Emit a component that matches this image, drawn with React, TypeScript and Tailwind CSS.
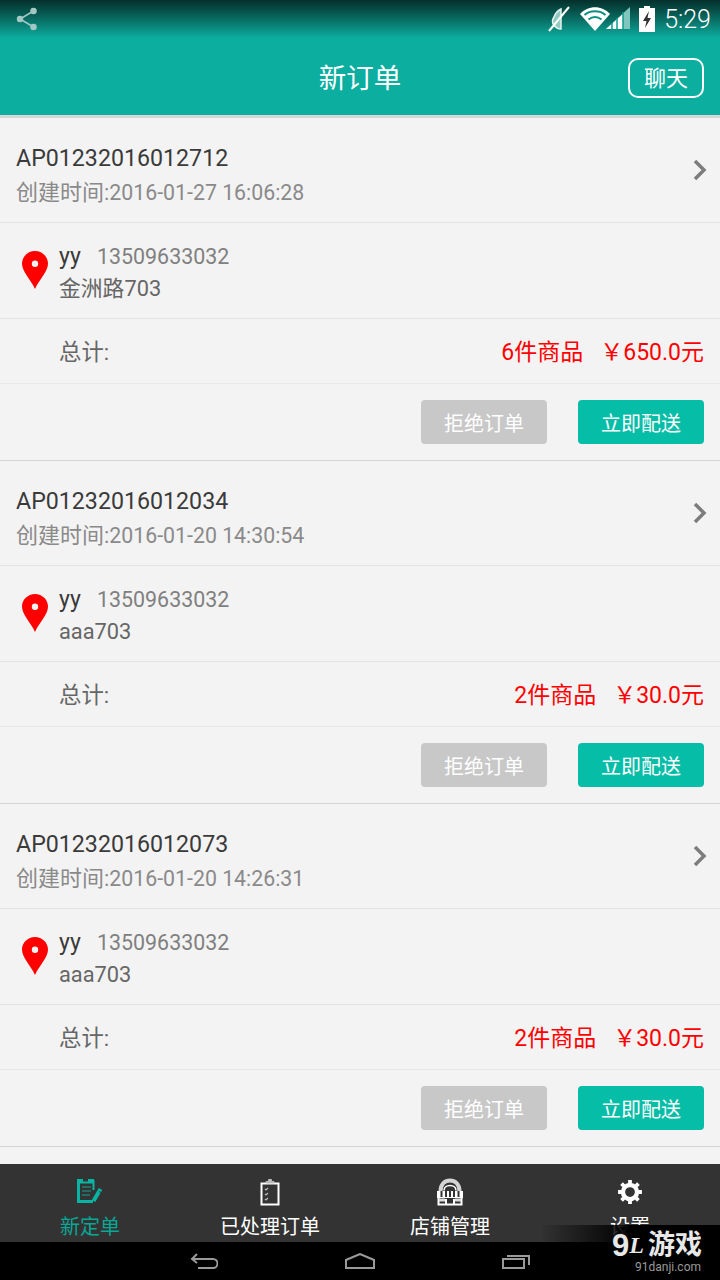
const orders = [
  { no: "AP01232016012712", time: "2016-01-27 16:06:28", addr: "金洲路703", count: "6件商品", total: "￥650.0元" },
  { no: "AP01232016012034", time: "2016-01-20 14:30:54", addr: "aaa703", count: "2件商品", total: "￥30.0元" },
  { no: "AP01232016012073", time: "2016-01-20 14:26:31", addr: "aaa703", count: "2件商品", total: "￥30.0元" },
];

const font = "font-['Roboto','Noto_Sans_CJK_SC',sans-serif]";

const Pin = () => (
  <svg width="26" height="38" viewBox="0 0 26 38" className="shrink-0 mt-[28px]">
    <path fillRule="evenodd" fill="#ff0000" d="M13 0C5.8 0 0 5.6 0 12.6 0 21 8.5 28 13 38c4.5-10 13-17 13-25.400C26 5.600 20.200 0 13 0zm0 9.500a3.200 3.200 0 1 1 0 6.400 3.200 3.200 0 0 1 0-6.400z" />
  </svg>
);

const OrderCard = ({ order }: { order: (typeof orders)[number] }) => (
  <div className="h-[343px] border-b border-[#d4d4d4] flex flex-col">
    <div className="h-[105px] shrink-0 border-b border-[#e2e2e2] pl-4 pr-[12px] pt-[23px] flex items-start justify-between">
      <div>
        <div className="text-[23.200px] leading-[34px] text-[#3a3a3a]">{order.no}</div>
        <div className="mt-[1px] text-[22px] leading-[34px] text-[#8a8a8a]">
          创建时间:<span className="text-[21.300px]">{order.time}</span>
        </div>
      </div>
      <svg width="16" height="24" viewBox="0 0 16 24" fill="none" stroke="#7d7d7d" strokeWidth="3.500" className="mt-[17px]">
        <path d="M3 3l9 9-9 9" />
      </svg>
    </div>
    <div className="h-[96px] shrink-0 border-b border-[#e2e2e2] pl-[22px] flex items-start gap-[11px]">
      <Pin />
      <div className="pt-[18px]">
        <div className="flex items-center h-[32px]">
          <span className="text-[23px] text-[#3a3a3a] w-[38px]">yy</span>
          <span className="text-[21.400px] text-[#808080]">13509633032</span>
        </div>
        <div className="text-[21.800px] leading-[32px] text-[#666666]">{order.addr}</div>
      </div>
    </div>
    <div className="h-[65px] shrink-0 border-b border-[#e8e8e8] pl-[59px] pr-4 pt-[4px] flex items-center justify-between">
      <span className="text-[22.400px] text-[#666666]">总计:</span>
      <span className="text-[23px] text-[#ff0000] flex gap-[17px]">
        <span>{order.count}</span>
        <span>{order.total}</span>
      </span>
    </div>
    <div className="flex-1 pr-4 pt-4 flex justify-end gap-[31px]">
      <button className="w-[126px] h-[44px] pt-[3px] rounded bg-[#c8c8c8] text-white text-[20px]">拒绝订单</button>
      <button className="w-[126px] h-[44px] pt-[3px] rounded bg-[#06bda8] text-white text-[20px]">立即配送</button>
    </div>
  </div>
);

const NavItem = ({ label, active, icon }: { label: string; active?: boolean; icon: React.ReactNode }) => (
  <div className="w-[180px] flex flex-col items-center pt-[13px]">
    <div className="h-[30px] flex items-center justify-center">{icon}</div>
    <div className={`mt-[5px] text-[20px] leading-[30px] ${active ? "text-[#08a797]" : "text-white"}`}>{label}</div>
  </div>
);

export default function App() {
  return (
    <div className={`${font} relative w-[720px] h-[1280px] overflow-hidden bg-[#f3f3f3] flex flex-col`}>
      <div className="h-[38px] shrink-0 bg-gradient-to-b from-[#04302c] to-[#0bae9f] flex items-center justify-between pl-[15px] pr-[9px]">
        <svg width="24" height="24" viewBox="0 0 24 24" fill="#a2c9c4" stroke="#a2c9c4" strokeWidth="1.500">
          <circle cx="18.500" cy="4" r="2.500" />
          <circle cx="5" cy="12" r="2.500" />
          <circle cx="18.500" cy="20" r="2.500" />
          <path d="M18.500 4 5 12l13.500 8" fill="none" />
        </svg>
        <div className="flex items-center">
          <svg width="24" height="26" viewBox="0 0 24 26" fill="none" className="mr-[9px]">
            <path d="M14 3C10 5 8 8 7 11c-2 3-2 6 0 8 2 3 5 4 7 4z" fill="#8fc9c1" stroke="#e5f2f0" strokeWidth="1.500" />
            <path d="M22 1 2 25" stroke="#fff" strokeWidth="2" />
          </svg>
          <svg width="50" height="24" viewBox="0 0 50 24">
            <path d="M0 7C8-2 22-2 30 7L15 24z" fill="#ffffff" />
            <path d="M4.500 8C10 3 20 3 25.500 8M8.500 12.500c4-3 9-3 13 0" stroke="#0a8f82" strokeWidth="2" fill="none" />
            <path d="M26 22 50 0v22z" fill="#7fc6bd" />
            <path d="M26 22h17V7z" fill="#ffffff" />
            <path d="M32 22V16M37 22V11M43 22V5" stroke="#0a9c8e" strokeWidth="1.500" />
          </svg>
          <svg width="16" height="26" viewBox="0 0 16 26" className="ml-[9px]">
            <path d="M5 0h6v2h5v24H0V2h5z" fill="#ffffff" />
            <path d="M10 5 4 15h3.500L6 22l6-10H8.500z" fill="#333333" />
          </svg>
          <span className="ml-[9px] text-[25px] leading-none text-white font-light">5:29</span>
        </div>
      </div>
      <div className="h-[77px] shrink-0 bg-[#0bae9f] relative flex items-center justify-center">
        <span className="text-[27.500px] text-white mt-[5px]">新订单</span>
        <div className="absolute right-4 top-[20px] w-[76px] h-[40px] rounded-[10px] border-2 border-white flex items-center justify-center text-[22px] text-white">
          聊天
        </div>
      </div>
      <div className="h-[3px] shrink-0 bg-[#d6d6d6]" />
      <div className="flex-1 overflow-hidden">
        {orders.map(o => (
          <OrderCard key={o.no} order={o} />
        ))}
      </div>
      <div className="h-[78px] shrink-0 bg-[#333333] flex overflow-hidden">
        <NavItem
          active
          label="新定单"
          icon={
            <svg width="26" height="26" viewBox="0 0 26 26" fill="none" stroke="#08b5a3">
              <path d="M1.500 0v22.500H16" strokeWidth="3" />
              <path d="M0 1.500h6M11 1.500h6" strokeWidth="3" />
              <path d="M3 3.500h13M16.500 1v10" strokeWidth="2" />
              <path d="M5 8h9M5 12h9M5 16h8" stroke="#1c7f74" strokeWidth="1.500" />
              <path d="M23.500 10 16.500 22" strokeWidth="4" />
              <path d="M22 12.500l3 1.500" stroke="#333333" strokeWidth="1" />
            </svg>
          }
        />
        <NavItem
          label="已处理订单"
          icon={
            <svg width="20" height="28" viewBox="0 0 20 28" fill="none" stroke="#fff" strokeWidth="2">
              <rect x="1.500" y="5.500" width="17" height="21" />
              <path d="M6 5V3.500h2.500V1.500h3v2H14V5z" fill="#bbbbbb" stroke="#bbbbbb" strokeWidth="1" />
              <path d="M5 11l1 1 2-2M5 16l1 1 2-2M5 21l1 1 2-2" stroke="#bbbbbb" strokeWidth="1.200" />
            </svg>
          }
        />
        <NavItem
          label="店铺管理"
          icon={
            <svg width="28" height="28" viewBox="0 0 28 28" fill="none">
              <path d="M4.500 13C4.500 6 9 2.500 14 2.500S23.500 6 23.500 13" stroke="#d4d4d4" strokeWidth="4" />
              <path d="M8 12.500C8 9.500 10.500 7.500 14 7.500s6 2 6 5" stroke="#ffffff" strokeWidth="1.500" />
              <path d="M1 13h26v7H1z" fill="#fff" />
              <path d="M5.500 13v6M10 13v6M14 13v6M18 13v6M22.500 13v6" stroke="#333" strokeWidth="2" />
              <path d="M2.500 20v6.500h23V20M10 21v5M18 21v5" stroke="#fff" strokeWidth="2" />
              <path d="M3 22h6M19 22h6" stroke="#ddd" strokeWidth="3" />
            </svg>
          }
        />
        <NavItem
          label="设置"
          icon={
            <svg width="26" height="26" viewBox="0 0 24 24" fill="none" stroke="#fff" strokeWidth="4" strokeLinejoin="round">
              <circle cx="12" cy="12" r="6.500" />
              <path d="M12 1v3M12 20v3M1 12h3M20 12h3M4.200 4.200l2.100 2.100M17.700 17.700l2.100 2.100M4.200 19.800l2.100-2.100M17.700 6.300l2.100-2.100" strokeWidth="3.500" />
            </svg>
          }
        />
      </div>
      <div className="h-[38px] shrink-0 bg-black flex items-center pl-[190px] gap-[127px]">
        <svg width="28" height="18" viewBox="0 0 28 18" fill="none" stroke="#9a9a9a" strokeWidth="2">
          <path d="M2 7h21a4 4 0 0 1 0 9H8M7 2 2 7l5 4" />
        </svg>
        <svg width="30" height="16" viewBox="0 0 30 16" fill="none" stroke="#9a9a9a" strokeWidth="2">
          <path d="M1 15V7l14-6 14 6v8z" />
        </svg>
        <svg width="28" height="16" viewBox="0 0 28 16" fill="none" stroke="#9a9a9a" strokeWidth="2">
          <path d="M1 6h21v9H1zM5 3h22v9" />
        </svg>
      </div>
      {/* watermark */}
      <div className="absolute right-0 bottom-0 w-[180px] h-[55px] bg-gradient-to-r from-transparent via-black to-black">
        <div className="absolute right-[18px] top-[7px] flex items-center text-[#e8e8e8] font-bold text-[27px] leading-[27px]">
          <span className="font-['Liberation_Sans'] text-[31px] leading-[27px]">9</span>
          <span className="italic font-['Liberation_Serif'] text-[24px] leading-[27px] mr-[4px]">L</span>
          <span>游戏</span>
        </div>
        <div className="absolute right-[19px] top-[35px] text-[12px] leading-[15px] text-[#9a9a9a]">91danji.com</div>
      </div>
    </div>
  );
}
